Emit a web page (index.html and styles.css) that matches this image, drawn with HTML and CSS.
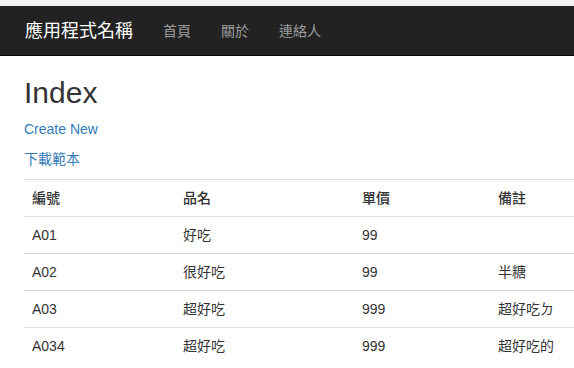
FILE: index.html
```html
<!DOCTYPE html>
<html lang="zh-Hant">
<head>
  <meta charset="UTF-8" />
  <meta name="viewport" content="width=device-width, initial-scale=1.0" />
  <title>Index - 應用程式名稱</title>
  <link rel="stylesheet" href="styles.css">
</head>
<body>
  <div class="topstrip"></div>
  <nav class="navbar">
    <a class="navbar-brand" href="#">應用程式名稱</a>
    <ul class="nav">
      <li><a href="#">首頁</a></li>
      <li><a href="#">關於</a></li>
      <li><a href="#">連絡人</a></li>
    </ul>
  </nav>

  <div class="body-content">
    <h2>Index</h2>
    <p><a href="#">Create New</a></p>
    <p><a href="#">下載範本</a></p>

    <table class="table">
      <tr>
        <th class="col-id">編號</th>
        <th class="col-name">品名</th>
        <th class="col-price">單價</th>
        <th>備註</th>
      </tr>
      <tr>
        <td>A01</td>
        <td>好吃</td>
        <td>99</td>
        <td></td>
      </tr>
      <tr>
        <td>A02</td>
        <td>很好吃</td>
        <td>99</td>
        <td>半糖</td>
      </tr>
      <tr>
        <td>A03</td>
        <td>超好吃</td>
        <td>999</td>
        <td>超好吃ㄉ</td>
      </tr>
      <tr>
        <td>A034</td>
        <td>超好吃</td>
        <td>999</td>
        <td>超好吃的</td>
      </tr>
    </table>
  </div>
</body>
</html>
```

FILE: styles.css
```css
body {
  margin: 0;
  font-family: "Liberation Sans", Arial, "Noto Sans CJK TC", sans-serif;
  font-size: 14px;
  line-height: 20px;
  color: #333;
  background-color: #fff;
}
a {
  color: #337ab7;
  text-decoration: none;
}

.topstrip {
  height: 6px;
  background-color: #f2f2f2;
}

/* Navbar */
.navbar {
  display: flex;
  height: 49px;
  padding-left: 10px;
  background-color: #222;
  border-bottom: 1px solid #080808;
}
.navbar-brand {
  padding: 15px;
  font-size: 18px;
  line-height: 20px;
  color: #fff;
}
.nav {
  display: flex;
  margin: 0;
  padding: 0;
  list-style: none;
}
.nav a {
  display: block;
  padding: 15px;
  line-height: 20px;
  color: #9d9d9d;
}

/* Content */
.body-content {
  padding-left: 24px;
}
h2 {
  margin: 20px 0 10px;
  font-size: 30px;
  font-weight: 500;
  line-height: 1.1;
}
p {
  margin: 0 0 10px;
}

.table {
  width: 100%;
  border-collapse: collapse;
  border-spacing: 0;
  table-layout: fixed;
}
.table th,
.table td {
  padding: 8px;
  line-height: 20px;
  text-align: left;
  vertical-align: top;
  border-top: 1px solid #ddd;
}
.table th {
  font-weight: 500;
}
.col-id { width: 135px; }
.col-name { width: 163px; }
.col-price { width: 120px; }
```
